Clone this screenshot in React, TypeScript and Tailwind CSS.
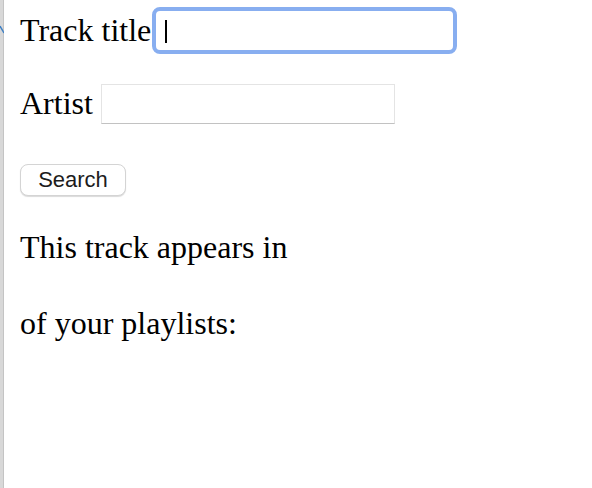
import React from "react";

export default function App() {
  return (
    <div className="flex w-[592px] h-[488px] bg-white overflow-hidden">
      <WindowEdge />
      <TrackSearch />
    </div>
  );
}

function WindowEdge() {
  return (
    <div className="relative w-[4px] h-full bg-[#d8d8d8] border-r border-[#c4c4c4] shrink-0">
      {/* little blue tick peeking in from the neighbouring window */}
      <svg className="absolute left-0 top-[24px]" width="4" height="12" viewBox="0 0 4 12">
        <path d="M0 2 L4 9" stroke="#3d7fc4" strokeWidth="1.5" fill="none" />
      </svg>
    </div>
  );
}

function TrackSearch() {
  return (
    <div className="flex flex-col pl-[16px] font-['Liberation_Serif',serif] text-[32px] leading-[36px] text-black">
      <div className="flex items-center h-[47px] mt-[7px]">
        <span className="mb-[2px]">Track title</span>
        <div className="relative ml-[1px] w-[305px] h-[47px] rounded-[8px] border-[4px] border-[#88aef0] bg-white">
          <input type="text" className="w-full h-full outline-none bg-transparent" />
          <span className="absolute left-[9px] top-[9px] w-[2px] h-[23px] bg-black" />
        </div>
      </div>

      <div className="flex items-center h-[40px] mt-[30px]">
        <span className="mb-[3px]">Artist</span>
        <input
          type="text"
          className="ml-[8px] w-[294px] h-[40px] border border-[#e4e4e4] border-b-[#c2c2c2] bg-white outline-none"
        />
      </div>

      <button className="mt-[40px] w-[106px] h-[32px] rounded-[8px] border border-[#d4d4d4] bg-white shadow-[0_1px_1px_rgba(0,0,0,0.15)] font-['Liberation_Sans',sans-serif] text-[22px] leading-[28px] text-[#1c1c1c]">
        Search
      </button>

      <p className="mt-[33px]">This track appears in</p>
      <p className="mt-[40px]">of your playlists:</p>
    </div>
  );
}
